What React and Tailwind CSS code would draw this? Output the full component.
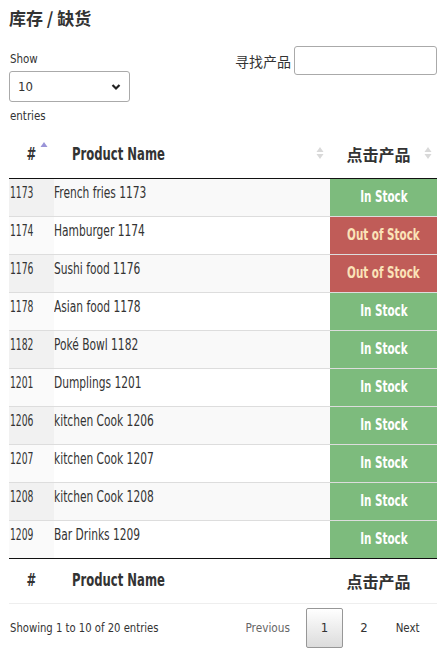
import React from 'react';

const rows = [
  { id: 1173, name: 'French fries 1173', ok: true },
  { id: 1174, name: 'Hamburger 1174', ok: false },
  { id: 1176, name: 'Sushi food 1176', ok: false },
  { id: 1178, name: 'Asian food 1178', ok: true },
  { id: 1182, name: 'Poké Bowl 1182', ok: true },
  { id: 1201, name: 'Dumplings 1201', ok: true },
  { id: 1206, name: 'kitchen Cook 1206', ok: true },
  { id: 1207, name: 'kitchen Cook 1207', ok: true },
  { id: 1208, name: 'kitchen Cook 1208', ok: true },
  { id: 1209, name: 'Bar Drinks 1209', ok: true },
];

const narrow = "font-['DejaVu_Sans_Condensed','Noto_Sans_CJK_SC',sans-serif]";
const cjk = "font-['Noto_Sans_CJK_SC',sans-serif]";

function SortIcon({ active }) {
  return (
    <svg width="8" height="14" viewBox="0 0 8 14" className="block">
      <path d="M4 1 L7.5 6 L0.5 6 Z" fill={active ? '#9a94d8' : '#d9d9d9'} />
      {!active && <path d="M4 13 L7.5 8 L0.5 8 Z" fill="#d9d9d9" />}
    </svg>
  );
}

export default function App() {
  return (
    <div className={`w-[446px] h-[658px] bg-white px-[9px] text-[#333] ${narrow}`}>
      {/* title */}
      <h1 className={`pt-[7px] text-[17px] leading-[22px] font-bold text-[#333] ${cjk}`}>
        库存 / 缺货
      </h1>

      {/* controls */}
      <div className="flex justify-between mt-[17px]">
        <div className="pt-[5px]">
          <div className="text-[13px] leading-[15px] pl-[1px]">
            <span className="inline-block origin-left scale-x-[0.88]">Show</span>
          </div>
          <div className="mt-[5px] w-[121px] h-[31px] border border-[#aaa] rounded-[3px] flex items-center justify-between px-[8px] text-[13px]">
            <span>10</span>
            <svg width="10" height="8" viewBox="0 0 10 8">
              <path d="M1.5 2 L5 5.5 L8.5 2" stroke="#222" strokeWidth="2.2" fill="none" />
            </svg>
          </div>
          <div className="mt-[6px] text-[13px] leading-[15px] pl-[1px]">
            <span className="inline-block origin-left scale-x-[0.88]">entries</span>
          </div>
        </div>
        <div className="flex items-start">
          <span className={`mt-[5px] mr-[3px] text-[14px] text-[#333] ${cjk}`}>寻找产品</span>
          <div className="w-[143px] h-[29px] border border-[#aaa] rounded-[3px] bg-white" />
        </div>
      </div>

      {/* table */}
      <table className="mt-[8px] w-[428px] border-collapse table-fixed">
        <colgroup>
          <col className="w-[45px]" />
          <col className="w-[276px]" />
          <col className="w-[107px]" />
        </colgroup>
        <thead>
          <tr className="h-[47px] border-b border-[#111] text-[17px] font-bold text-[#333]">
            <th className="relative">
              <span className="inline-block scale-x-[0.76]">#</span>
              <span className="absolute left-[31px] top-[10px]"><SortIcon active /></span>
            </th>
            <th className="relative text-left pl-[18px]">
              <span className="inline-block origin-left scale-x-[0.76]">Product Name</span>
              <span className="absolute left-[262px] top-[15px]"><SortIcon /></span>
            </th>
            <th className={`relative pr-[10px] text-[16px] ${cjk}`}>
              点击产品
              <span className="absolute left-[94px] top-[15px]"><SortIcon /></span>
            </th>
          </tr>
        </thead>
        <tbody>
          {rows.map((r, i) => (
            <tr key={r.id} className={`h-[38px] ${i > 0 ? 'border-t border-[#ddd]' : ''} text-[16px]`}>
              <td className={`align-top pt-[2px] pl-[1px] ${i % 2 === 0 ? 'bg-[#f1f1f1]' : 'bg-[#fafafa]'}`}>
                <span className="inline-block origin-left scale-x-[0.64]">{r.id}</span>
              </td>
              <td className={`align-top pt-[2px] ${i % 2 === 0 ? 'bg-[#f9f9f9]' : 'bg-white'}`}>
                <span className="inline-block origin-left scale-x-[0.74]">{r.name}</span>
              </td>
              <td className={`text-center font-bold text-[16px] ${r.ok ? 'bg-[#7dbb7d] text-white' : 'bg-[#c05c58] text-[#fbe3b8]'}`}>
                <span className="inline-block scale-x-[0.72]">{r.ok ? 'In Stock' : 'Out of Stock'}</span>
              </td>
            </tr>
          ))}
        </tbody>
        <tfoot>
          <tr className="h-[45px] border-t border-[#111] border-b border-b-[#eee] text-[17px] font-bold text-[#333]">
            <th><span className="inline-block scale-x-[0.76]">#</span></th>
            <th className="text-left pl-[18px]">
              <span className="inline-block origin-left scale-x-[0.76]">Product Name</span>
            </th>
            <th className={`pr-[10px] text-[16px] ${cjk}`}>点击产品</th>
          </tr>
        </tfoot>
      </table>

      {/* info + pagination */}
      <div className="flex items-center justify-between mt-[4px]">
        <span className="text-[13px] pl-[1px]">
          <span className="inline-block origin-left scale-x-[0.86]">Showing 1 to 10 of 20 entries</span>
        </span>
        <div className="flex items-center text-[13px]">
          <span className="text-[#666] w-[58px] text-center">
            <span className="inline-block scale-x-[0.9]">Previous</span>
          </span>
          <span className="ml-[9px] w-[37px] h-[40px] flex items-center justify-center border border-[#979797] rounded-[2px] bg-gradient-to-b from-white to-[#dcdcdc]">1</span>
          <span className="w-[42px] text-center">2</span>
          <span className="w-[52px] text-center pr-[6px]">
            <span className="inline-block scale-x-[0.88]">Next</span>
          </span>
        </div>
      </div>
    </div>
  );
}
